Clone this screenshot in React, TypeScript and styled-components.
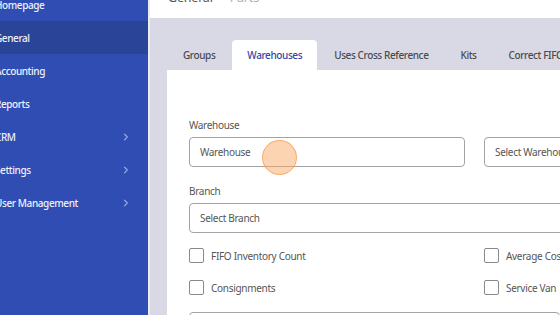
import React from "react";
import styled, { createGlobalStyle } from "styled-components";

const GlobalStyle = createGlobalStyle`
  html, body {
    margin: 0;
    padding: 0;
    width: 560px;
    height: 315px;
    overflow: hidden;
  }
  body {
    font-family: "Noto Sans", "Open Sans", sans-serif;
  }
`;

const navItems = [
  { label: "Homepage" },
  { label: "General", active: true },
  { label: "Accounting" },
  { label: "Reports" },
  { label: "CRM", sub: true },
  { label: "Settings", sub: true },
  { label: "User Management", sub: true },
];

const tabs = ["Groups", "Warehouses", "Uses Cross Reference", "Kits", "Correct FIFO"];

const checks = [
  ["FIFO Inventory Count", "Average Cost"],
  ["Consignments", "Service Van"],
];

function Chevron() {
  return (
    <svg width="8" height="8" viewBox="0 0 8 8" fill="none">
      <path d="M2.5 1.2 L5.3 4 L2.5 6.8" stroke="#9fb0e6" strokeWidth="1.1" strokeLinecap="round" strokeLinejoin="round" />
    </svg>
  );
}

export default function App() {
  return (
    <Page>
      <GlobalStyle />
      <Sidebar>
        {navItems.map((item) => (
          <NavItem key={item.label} $active={item.active}>
            <NavLabel>{item.label}</NavLabel>
            {item.sub && <Chevron />}
          </NavItem>
        ))}
      </Sidebar>
      <Divider />
      <Main>
        <TopBar>
          <Crumb>General</Crumb>
          <CrumbMuted>Parts</CrumbMuted>
        </TopBar>
        <Body>
          <TabRow>
            {tabs.map((t) => (
              <Tab key={t} $active={t === "Warehouses"}>
                {t}
              </Tab>
            ))}
          </TabRow>
          <Card>
            <FieldGrid>
              <Field>
                <Label>Warehouse</Label>
                <InputWrap>
                  <Input>Warehouse</Input>
                  <ClickMark />
                </InputWrap>
              </Field>
              <Field>
                <Label>&nbsp;</Label>
                <Input>Select Warehouse</Input>
              </Field>
              <Field $wide>
                <Label>Branch</Label>
                <Input>Select Branch</Input>
              </Field>
            </FieldGrid>
            <CheckGrid>
              {checks.flat().map((c) => (
                <CheckRow key={c}>
                  <Box />
                  <span>{c}</span>
                </CheckRow>
              ))}
            </CheckGrid>
            <Input />
          </Card>
        </Body>
      </Main>
    </Page>
  );
}

const Page = styled.div`
  display: flex;
  width: 560px;
  height: 315px;
  overflow: hidden;
  background: #d9d9e5;
`;

const Sidebar = styled.nav`
  width: 148px;
  flex-shrink: 0;
  background: #304db3;
  display: flex;
  flex-direction: column;
  margin-top: -12px;
`;

const NavItem = styled.div<{ $active?: boolean }>`
  height: 33px;
  flex-shrink: 0;
  display: flex;
  align-items: center;
  justify-content: space-between;
  padding-right: 18px;
  background: ${(p) => (p.$active ? "#2a4498" : "transparent")};
  color: #eef1fb;
  font-size: 10px;
  font-weight: 500;
  letter-spacing: -0.4px;
`;

const NavLabel = styled.span`
  margin-left: -5px;
  white-space: nowrap;
`;

const Divider = styled.div`
  width: 2px;
  flex-shrink: 0;
  background: #ececf2;
`;

const Main = styled.div`
  flex: 1;
  display: flex;
  flex-direction: column;
  min-width: 0;
`;

const TopBar = styled.div`
  height: 18px;
  flex-shrink: 0;
  background: #ffffff;
  display: flex;
  align-items: flex-end;
  gap: 17px;
  padding-left: 18px;
  overflow: hidden;
  font-size: 12.5px;
  line-height: 13px;
  letter-spacing: -0.2px;
`;

const Crumb = styled.span`
  color: #555;
  margin-bottom: 14px;
`;

const CrumbMuted = styled.span`
  color: #b0b0b0;
  margin-bottom: 14px;
`;

const Body = styled.div`
  flex: 1;
  padding: 22px 0 0 17px;
  display: flex;
  flex-direction: column;
`;

const TabRow = styled.div`
  display: flex;
  gap: 2px;
  white-space: nowrap;
`;

const Tab = styled.div<{ $active?: boolean }>`
  height: 30px;
  display: flex;
  align-items: center;
  padding: 0 15px;
  font-size: 10px;
  font-weight: 500;
  letter-spacing: -0.4px;
  color: ${(p) => (p.$active ? "#3446a8" : "#4a4a4a")};
  background: ${(p) => (p.$active ? "#ffffff" : "transparent")};
  border-radius: 4px 4px 0 0;

  &:first-child {
    padding-left: 16px;
  }
`;

const Card = styled.div`
  flex: 1;
  background: #ffffff;
  padding: 49px 0 0 22px;
  display: flex;
  flex-direction: column;
`;

const FieldGrid = styled.div`
  display: grid;
  grid-template-columns: 276px 276px;
  column-gap: 19px;
  row-gap: 18px;
`;

const Field = styled.div<{ $wide?: boolean }>`
  display: flex;
  flex-direction: column;
  gap: 5px;
  grid-column: ${(p) => (p.$wide ? "1 / -1" : "auto")};
`;

const Label = styled.div`
  font-size: 10px;
  color: #555;
  line-height: 13px;
  letter-spacing: -0.3px;
`;

const InputWrap = styled.div`
  position: relative;
`;

const Input = styled.div`
  height: 30px;
  flex-shrink: 0;
  box-sizing: border-box;
  border: 1px solid #a3a3a3;
  border-radius: 4px;
  padding: 0 10px;
  display: flex;
  align-items: center;
  font-size: 10px;
  letter-spacing: -0.3px;
  color: #555;
  white-space: nowrap;
`;

const ClickMark = styled.div`
  position: absolute;
  left: 73px;
  top: 3px;
  width: 35px;
  height: 35px;
  border-radius: 50%;
  background: rgba(249, 170, 100, 0.5);
  border: 1.5px solid rgba(245, 160, 85, 0.75);
  box-sizing: border-box;
`;

const CheckGrid = styled.div`
  display: grid;
  grid-template-columns: 276px 276px;
  column-gap: 19px;
  row-gap: 17px;
  margin: 15px 0 17px;
`;

const CheckRow = styled.label`
  display: flex;
  align-items: center;
  gap: 7px;
  font-size: 10px;
  letter-spacing: -0.3px;
  color: #555;
  white-space: nowrap;
  height: 15px;
`;

const Box = styled.span`
  width: 15px;
  height: 15px;
  box-sizing: border-box;
  border: 1px solid #8a8a8a;
  border-radius: 2px;
  flex-shrink: 0;
`;
